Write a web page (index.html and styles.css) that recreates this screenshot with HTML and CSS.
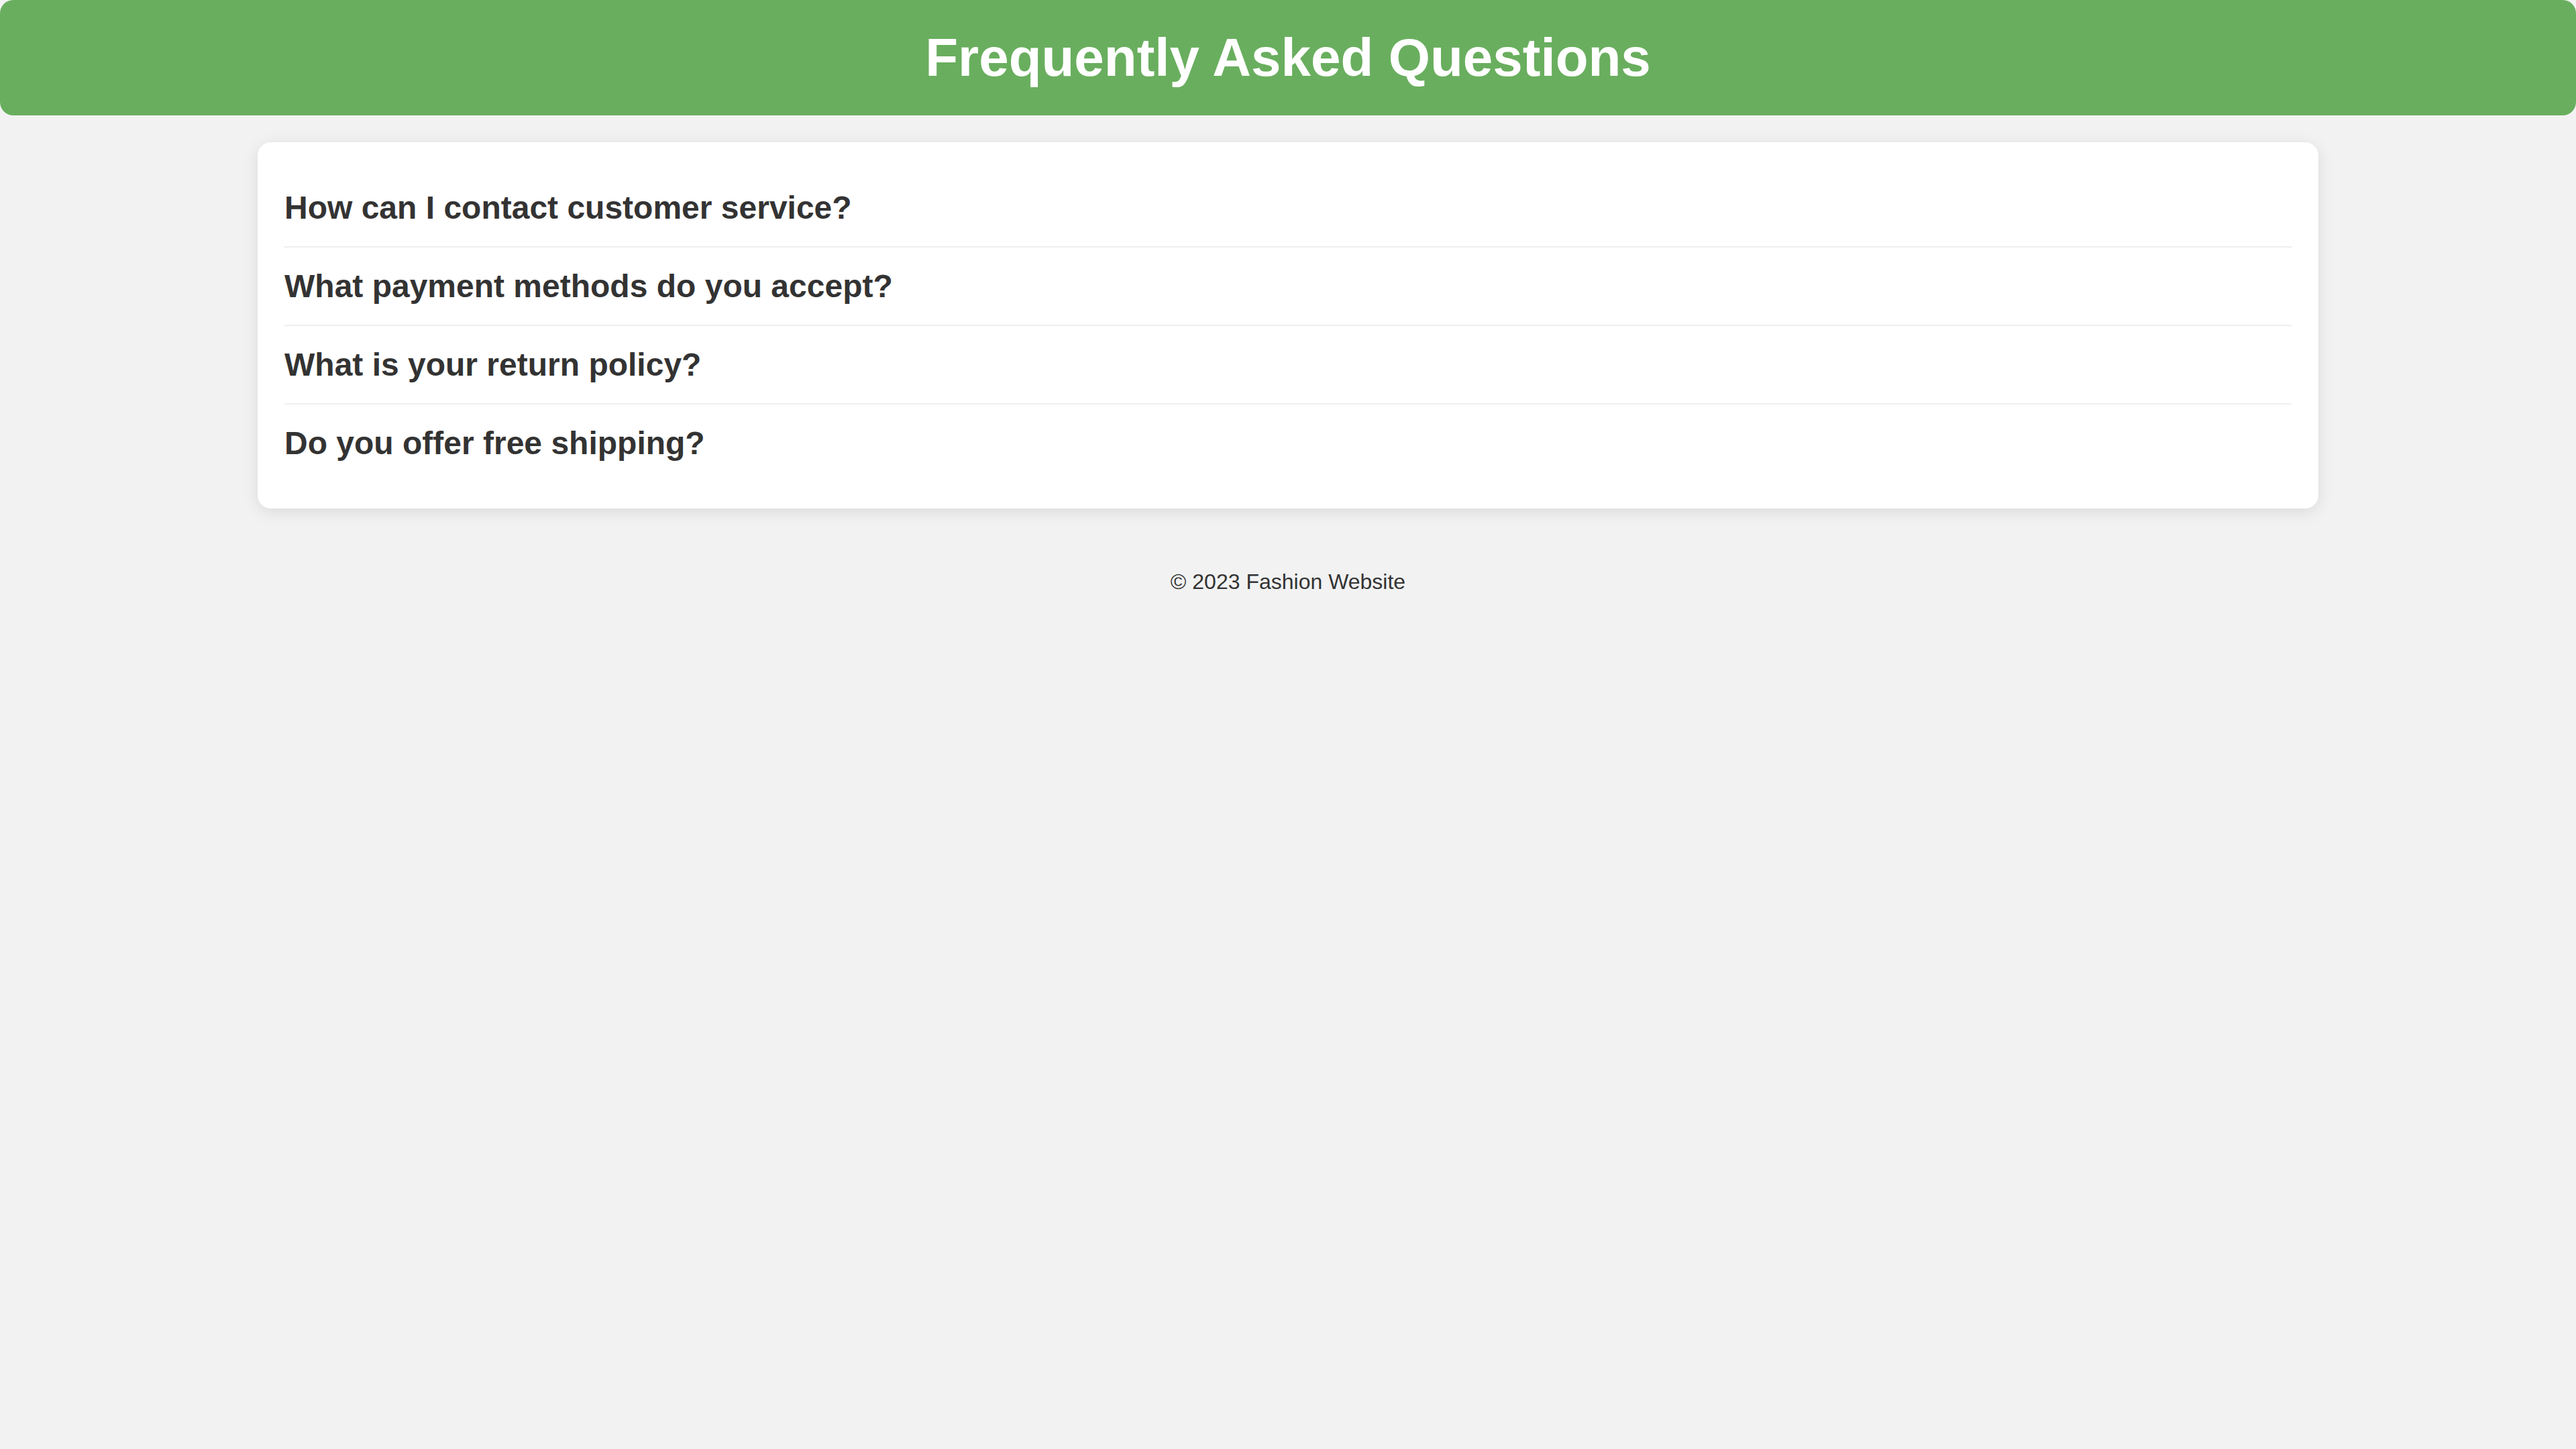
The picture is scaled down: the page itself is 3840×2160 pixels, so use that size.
FILE: index.html
```html
<!DOCTYPE html>
<html lang="en">
<head>
<meta charset="utf-8">
<title>FAQ</title>
<link rel="stylesheet" href="styles.css">
</head>
<body>
<header class="site-header">
  <h1 class="site-title">Frequently Asked Questions</h1>
</header>
<main class="faq-card">
  <div class="faq-item"><h3 class="faq-question">How can I contact customer service?</h3></div>
  <div class="faq-item"><h3 class="faq-question">What payment methods do you accept?</h3></div>
  <div class="faq-item"><h3 class="faq-question">What is your return policy?</h3></div>
  <div class="faq-item"><h3 class="faq-question">Do you offer free shipping?</h3></div>
</main>
<footer class="site-footer">&copy; 2023 Fashion Website</footer>
</body>
</html>
```
FILE: styles.css
```css
html, body {
  margin: 0;
  padding: 0;
}
body {
  background: #f2f2f2;
  font-family: "Liberation Sans", Arial, sans-serif;
  color: #333;
}
.site-header {
  background: #69ae5e;
  border-radius: 20px;
  padding: 40px 0;
  text-align: center;
}
.site-title {
  margin: 0;
  font-size: 80px;
  font-weight: bold;
  line-height: 92px;
  color: #fff;
}
.faq-card {
  display: block;
  width: 80%;
  box-sizing: border-box;
  margin: 40px auto 0;
  padding: 10px 40px;
  background: #fff;
  border-radius: 20px;
  box-shadow: 0 5px 25px rgba(0, 0, 0, 0.1);
}
.faq-item {
  padding: 30px 0;
  border-bottom: 2px solid #eeeeee;
}
.faq-item:first-child {
  padding-top: 60px;
}
.faq-item:last-child {
  border-bottom: none;
  padding-bottom: 60px;
}
.faq-question {
  margin: 0;
  font-size: 48px;
  font-weight: bold;
  line-height: 55px;
  color: #333;
}
.site-footer {
  text-align: center;
  font-size: 32px;
  line-height: 37px;
  padding: 91px 0 40px;
  color: #333;
}
```
